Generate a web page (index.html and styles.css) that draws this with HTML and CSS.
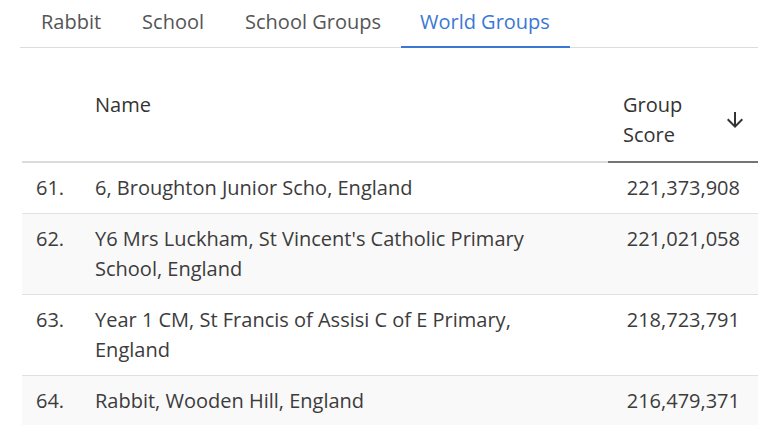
FILE: index.html
```html
<!DOCTYPE html>
<html lang="en">
	<head>
		<meta charset="utf-8" />
		<title>World Groups</title>
		<link rel="stylesheet" href="styles.css">
	</head>
	<body>
		<div class="tabs">
			<div class="tab">Rabbit</div>
			<div class="tab">School</div>
			<div class="tab">School Groups</div>
			<div class="tab active">World Groups</div>
		</div>

		<table class="scores">
			<colgroup>
				<col class="col-rank">
				<col class="col-name">
				<col class="col-score">
			</colgroup>
			<thead>
				<tr>
					<th class="rank"></th>
					<th class="name">Name</th>
					<th class="score sorted">
						<div class="sort-head">
							<span>Group<br>Score</span>
							<svg width="24" height="24" viewBox="0 0 24 24"><path d="M20 12l-1.41-1.41L13 16.17V4h-2v12.17l-5.58-5.59L4 12l8 8 8-8z" fill="#333"/></svg>
						</div>
					</th>
				</tr>
			</thead>
			<tbody>
				<tr>
					<td class="rank">61.</td>
					<td class="name">6, Broughton Junior Scho, England</td>
					<td class="score">221,373,908</td>
				</tr>
				<tr>
					<td class="rank">62.</td>
					<td class="name">Y6 Mrs Luckham, St Vincent's Catholic Primary School, England</td>
					<td class="score">221,021,058</td>
				</tr>
				<tr>
					<td class="rank">63.</td>
					<td class="name">Year 1 CM, St Francis of Assisi C of E Primary, England</td>
					<td class="score">218,723,791</td>
				</tr>
				<tr>
					<td class="rank">64.</td>
					<td class="name">Rabbit, Wooden Hill, England</td>
					<td class="score">216,479,371</td>
				</tr>
			</tbody>
		</table>
	</body>
</html>
```

FILE: styles.css
```css
body {
	margin: 0;
	padding: 0 22px 0 20px;
	font-family: "Open Sans", "Noto Sans", sans-serif;
	color: #3c3c3c;
	background: white;
	overflow: hidden;
}

.tabs {
	display: flex;
	border-bottom: 1px solid #dcdcdc;
	height: 48px;
	box-sizing: border-box;
}
.tab {
	padding: 8px 20px 0 21px;
	font-size: 20px;
	color: #555;
	box-sizing: border-box;
}
.tab.active {
	padding-left: 19px;
	color: #3b78d4;
	border-bottom: 2px solid #3b78d4;
	margin-bottom: -1px;
}

.scores {
	width: 736px;
	margin-left: 2px;
	margin-top: 14px;
	border-collapse: collapse;
	table-layout: fixed;
	font-size: 20px;
}
.col-rank {
	width: 58px;
}
.col-score {
	width: 150px;
}
.scores th {
	text-align: left;
	font-weight: normal;
	color: #333;
	vertical-align: top;
	padding: 28px 15px 11px 15px;
	line-height: 30px;
	border-bottom: 2px solid #dcdcdc;
}
.scores th.sorted {
	border-bottom: 2px solid #757575;
	padding-right: 11px;
}
.sort-head {
	display: flex;
	align-items: center;
	justify-content: space-between;
}

.scores td {
	vertical-align: top;
	padding: 10px 15px 10px 15px;
	line-height: 30px;
	border-bottom: 1px solid #e0e0e0;
}
.scores tbody tr:nth-child(even) {
	background: #f9f9f9;
}
.scores .rank {
	padding-left: 14px;
	padding-right: 0;
}
.scores .name {
	padding-right: 30px;
}
.scores td.score {
	text-align: right;
	padding-right: 18px;
}
```
